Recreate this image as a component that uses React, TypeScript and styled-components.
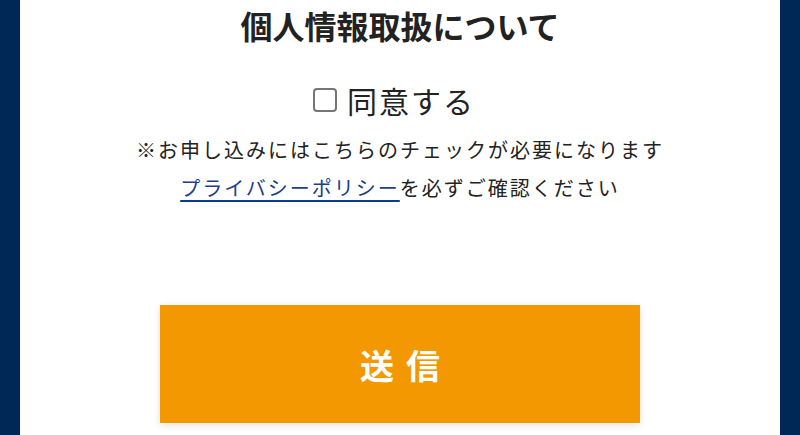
import styled, { createGlobalStyle } from 'styled-components'

const GlobalStyle = createGlobalStyle`
	html, body {
		margin: 0;
		padding: 0;
		height: 100%;
		background: #002856;
		overflow: hidden;
	}
	#root {
		height: 100%;
	}
`

const Card = styled.div`
	margin: 0 20px;
	height: 100%;
	background: #ffffff;
	display: flex;
	flex-direction: column;
	align-items: center;
	padding-top: 1px;
	box-sizing: border-box;
	font-family: 'Noto Sans CJK JP', 'Noto Sans', sans-serif;
	color: #222222;
`

const Title = styled.h2`
	margin: 0;
	font-size: 32px;
	line-height: 48px;
	font-weight: 700;
	color: #222222;
`

const AgreeLabel = styled.label`
	margin-top: 27px;
	padding-right: 12px;
	display: flex;
	align-items: center;
	gap: 10px;
	font-size: 30px;
	line-height: 48px;
	letter-spacing: 2px;
	font-weight: 400;
	color: #222222;
	cursor: pointer;
`

const Check = styled.input`
	appearance: none;
	margin: 0;
	width: 24px;
	height: 24px;
	border: 2px solid #767676;
	border-radius: 4px;
	box-sizing: border-box;
	background: #fff;
`

const Notes = styled.div`
	margin-top: 7px;
	text-align: center;
	font-size: 20px;
	line-height: 38px;
	letter-spacing: 2px;
	color: #222222;
`

const PolicyLink = styled.a`
	color: #1b3f8b;
	text-decoration: underline;
	text-decoration-color: #0a3c8f;
	text-decoration-thickness: 2px;
	text-underline-offset: 4px;
`

const SubmitButton = styled.button`
	margin-top: 98px;
	width: 480px;
	height: 118px;
	flex-shrink: 0;
	border: none;
	background: #f39800;
	color: #ffffff;
	font-family: 'Noto Sans CJK JP', 'Noto Sans', sans-serif;
	font-size: 34px;
	font-weight: 700;
	letter-spacing: 12px;
	padding: 0 0 0 12px;
	box-shadow: 0 2px 8px rgba(0, 0, 0, 0.12);
	cursor: pointer;
`

const App = () => {
	return (
		<>
			<GlobalStyle />
			<Card>
				<Title>個人情報取扱について</Title>
				<AgreeLabel>
					<Check type="checkbox" />
					同意する
				</AgreeLabel>
				<Notes>
					※お申し込みにはこちらのチェックが必要になります
					<br />
					<PolicyLink href="#">プライバシーポリシー</PolicyLink>を必ずご確認ください
				</Notes>
				<SubmitButton type="submit">送信</SubmitButton>
			</Card>
		</>
	)
}

export default App
